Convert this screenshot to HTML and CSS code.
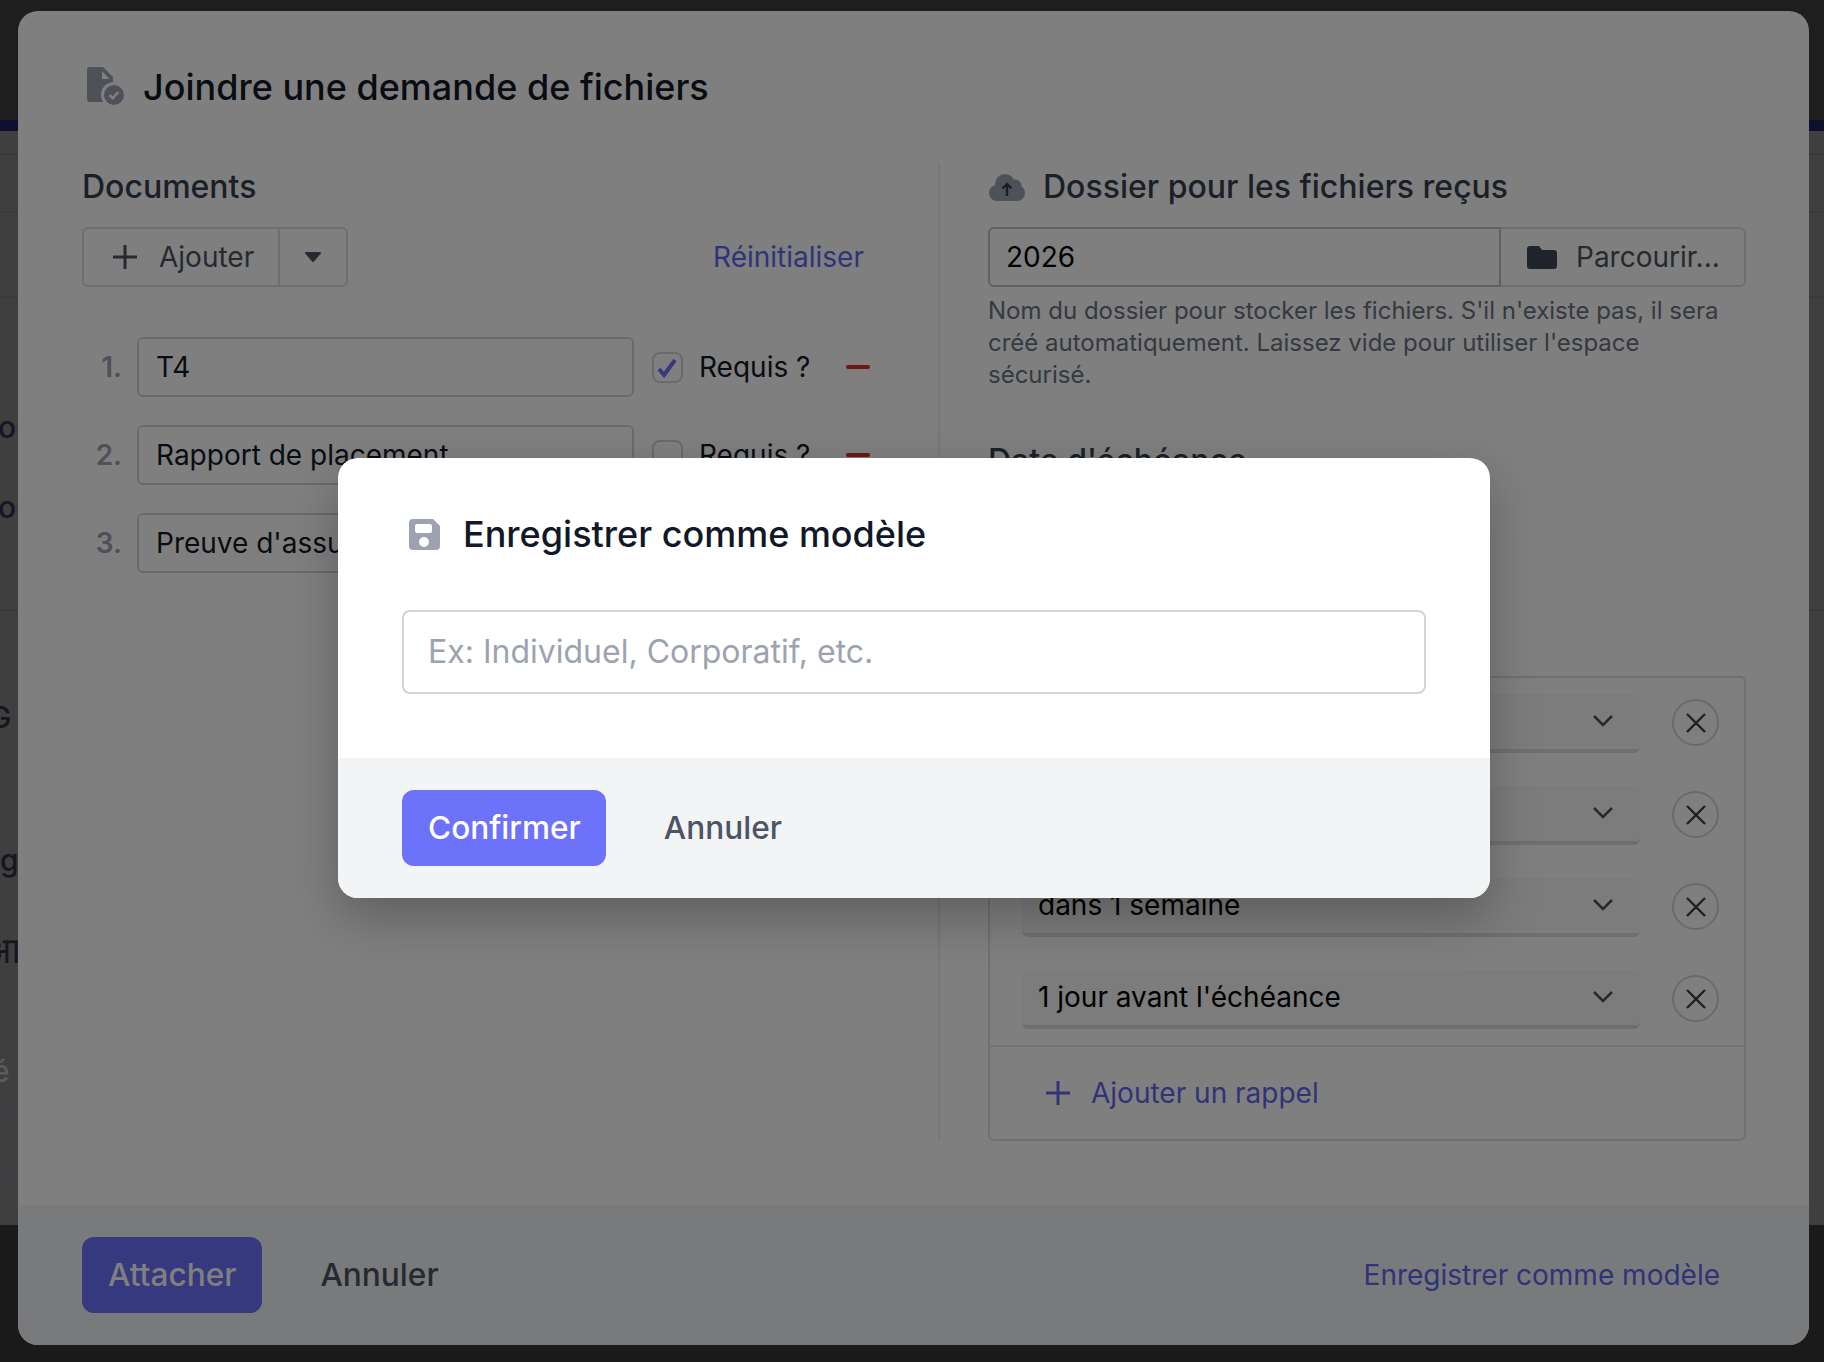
FILE: index.html
```html
<!DOCTYPE html>
<html lang="fr">

<head>
  <meta charset="UTF-8">
  <title>Enregistrer comme modèle</title>
  <link rel="stylesheet" href="styles.css">
</head>

<body>
  <!-- Page behind the dialogs -->
  <div class="page">
    <div class="page-top"></div>
    <div class="page-strip"></div>
    <div class="page-body">
      <div class="page-row row-a"></div>
      <div class="page-row row-b"></div>
      <div class="page-row row-c"></div>
      <div class="page-row row-d"></div>
      <div class="page-row row-e"></div>
      <div class="page-row row-f"></div>
      <div class="scrap scrap-1">ou</div>
      <div class="scrap scrap-2">ou</div>
      <div class="scrap scrap-3">G</div>
      <div class="scrap scrap-4">g</div>
      <div class="scrap scrap-5">आ</div>
      <div class="scrap scrap-6">é</div>
    </div>
  </div>

  <!-- First dialog -->
  <div class="modal">
    <div class="modal-main">
      <h2 class="modal-title">
        <svg class="title-icon" viewBox="0 0 40 40">
          <path fill="#9ca3af" d="M4 0h13l10 10v25H4a3 3 0 0 1-3-3V3a3 3 0 0 1 3-3z" />
          <path fill="#fff" d="M16 4l7.500 8H16z" />
          <circle fill="#fff" cx="28" cy="28" r="13" />
          <circle fill="#9ca3af" cx="28" cy="28" r="10" />
          <path fill="none" stroke="#fff" stroke-width="2.600" d="M23.500 28l3.200 3.200 5.600-6" />
        </svg>
        Joindre une demande de fichiers
      </h2>

      <div class="columns">
        <div class="col-left">
          <h3 class="section-title">Documents</h3>
          <div class="doc-actions">
            <div class="split-btn">
              <div class="split-main">
                <svg class="plus-icon" viewBox="0 0 26 26">
                  <path d="M13 1v24M1 13h24" />
                </svg>
                Ajouter
              </div>
              <div class="split-caret">
                <svg class="caret" viewBox="0 0 18 12">
                  <path d="M2 2h14l-7 8z" />
                </svg>
              </div>
            </div>
            <a class="link">Réinitialiser</a>
          </div>

          <div class="doc-row">
            <span class="doc-num">1.</span>
            <div class="text-input">T4</div>
            <span class="checkbox">
              <svg viewBox="0 0 27 27">
                <path d="M5 15l5 6 11-15" />
              </svg>
            </span>
            <span class="req-label">Requis ?</span>
            <span class="minus"></span>
          </div>
          <div class="doc-row">
            <span class="doc-num">2.</span>
            <div class="text-input">Rapport de placement</div>
            <span class="checkbox"></span>
            <span class="req-label">Requis ?</span>
            <span class="minus"></span>
          </div>
          <div class="doc-row">
            <span class="doc-num">3.</span>
            <div class="text-input">Preuve d'assurance</div>
            <span class="checkbox"></span>
            <span class="req-label">Requis ?</span>
            <span class="minus"></span>
          </div>
        </div>

        <div class="col-right">
          <h3 class="section-title with-icon">
            <svg class="cloud-icon" viewBox="0 0 36 27">
              <g fill="#9ca3af">
                <circle cx="8" cy="19" r="8" />
                <circle cx="16" cy="10" r="10" />
                <circle cx="26" cy="12" r="6.500" />
                <circle cx="28" cy="19" r="8" />
                <rect x="8" y="15" width="20" height="12" />
              </g>
              <path fill="none" stroke="#374151" stroke-width="2.400" d="M18 22V10M13.500 14.500L18 10l4.500 4.500" />
            </svg>
            Dossier pour les fichiers reçus
          </h3>
          <div class="folder-group">
            <div class="folder-input">2026</div>
            <div class="folder-btn">
              <svg class="folder-icon" viewBox="0 0 30 23">
                <path d="M3 0h9l3 4h12a3 3 0 0 1 3 3v13a3 3 0 0 1-3 3H3a3 3 0 0 1-3-3V3a3 3 0 0 1 3-3z" />
              </svg>
              Parcourir...
            </div>
          </div>
          <p class="help">Nom du dossier pour stocker les fichiers. S'il n'existe pas, il sera créé automatiquement. Laissez vide pour utiliser l'espace sécurisé.</p>

          <h3 class="section-title due-title">Date d'échéance</h3>

          <div class="reminders">
            <div class="reminder-list">
              <div class="reminder">
                <div class="select">dans 1 jour<svg class="chevron" viewBox="0 0 20 12"><path d="M1 1l9 9 9-9" /></svg></div>
                <span class="remove"><svg viewBox="0 0 20 20"><path d="M1 1l18 18M19 1L1 19" /></svg></span>
              </div>
              <div class="reminder">
                <div class="select">dans 3 jours<svg class="chevron" viewBox="0 0 20 12"><path d="M1 1l9 9 9-9" /></svg></div>
                <span class="remove"><svg viewBox="0 0 20 20"><path d="M1 1l18 18M19 1L1 19" /></svg></span>
              </div>
              <div class="reminder">
                <div class="select">dans 1 semaine<svg class="chevron" viewBox="0 0 20 12"><path d="M1 1l9 9 9-9" /></svg></div>
                <span class="remove"><svg viewBox="0 0 20 20"><path d="M1 1l18 18M19 1L1 19" /></svg></span>
              </div>
              <div class="reminder">
                <div class="select">1 jour avant l'échéance<svg class="chevron" viewBox="0 0 20 12"><path d="M1 1l9 9 9-9" /></svg></div>
                <span class="remove"><svg viewBox="0 0 20 20"><path d="M1 1l18 18M19 1L1 19" /></svg></span>
              </div>
            </div>
            <div class="reminder-add">
              <svg class="plus-icon link-plus" viewBox="0 0 26 26">
                <path d="M13 1v24M1 13h24" />
              </svg>
              Ajouter un rappel
            </div>
          </div>
        </div>
      </div>
    </div>

    <div class="modal-footer">
      <button class="btn-primary">Attacher</button>
      <button class="btn-plain">Annuler</button>
      <a class="link footer-link">Enregistrer comme modèle</a>
    </div>
  </div>
  <div class="backdrop"></div>

  <!-- Template name dialog -->
  <div class="dialog">
    <div class="dialog-main">
      <h2 class="dialog-title">
        <svg class="save-icon" viewBox="0 0 31 31">
          <path fill-rule="evenodd" d="M4 0h20l7 7v20a4 4 0 0 1-4 4H4a4 4 0 0 1-4-4V4a4 4 0 0 1 4-4zm4 5a2 2 0 0 0-2 2v5a2 2 0 0 0 2 2h13a2 2 0 0 0 2-2V7a2 2 0 0 0-2-2zm7 13a5 5 0 1 0 0 10 5 5 0 0 0 0-10z" />
        </svg>
        Enregistrer comme modèle
      </h2>
      <input class="name-input" type="text" placeholder="Ex: Individuel, Corporatif, etc.">
    </div>
    <div class="dialog-footer">
      <button class="btn-primary confirm-btn">Confirmer</button>
      <button class="btn-plain dialog-cancel">Annuler</button>
    </div>
  </div>
</body>

</html>
```

FILE: styles.css
```css
* {
  margin: 0;
  padding: 0;
  box-sizing: border-box;
}

html,
body {
  width: 1824px;
  height: 1362px;
  overflow: hidden;
}

body {
  font-family: 'Inter', sans-serif;
  font-size: 28px;
  color: #111827;
  background: #343434;
  position: relative;
}

/* Page behind the dialogs */
.page {
  height: 100%;
  display: flex;
  flex-direction: column;
}

.page-top {
  height: 120px;
  background: #3c3c3c;
}

.page-strip {
  height: 11px;
  background: #1e1e60;
}

.page-body {
  height: 1094px;
  background: #7e7e7e;
  position: relative;
  overflow: hidden;
}

.page-row {
  border-bottom: 2px solid #747474;
}

.row-a { height: 24px; }
.row-b { height: 58px; }
.row-c { height: 85px; }
.row-d { height: 313px; }
.row-e { height: 503px; border-bottom-color: #807a9a; }
.row-f { height: 67px; border-bottom-color: #807a9a; }

.scrap {
  position: absolute;
  font-size: 30px;
  font-weight: 500;
  color: #282e3e;
}

.scrap-1 { top: 278px; left: -2px; }
.scrap-2 { top: 358px; left: -2px; }
.scrap-3 { top: 568px; left: -11px; }
.scrap-4 { top: 711px; left: 0; }
.scrap-5 { top: 794px; left: -16px; font-size: 36px; }
.scrap-6 { top: 922px; left: -8px; color: #b6b6b6; }

.backdrop {
  position: absolute;
  top: 0;
  left: 0;
  right: 0;
  bottom: 0;
  background: rgba(0, 0, 0, 0.5);
}

/* First dialog */
.modal {
  position: absolute;
  top: 11px;
  left: 18px;
  width: 1791px;
  height: 1334px;
  background: #fff;
  border-radius: 20px;
  display: flex;
  flex-direction: column;
  overflow: hidden;
}

.modal-main {
  flex: 1;
  padding: 53px 64px 0;
}

.modal-title {
  display: flex;
  align-items: center;
  gap: 17px;
  height: 46px;
  font-size: 36px;
  font-weight: 500;
  color: #111827;
}

.title-icon {
  width: 40px;
  height: 40px;
  margin-left: 4px;
}

.columns {
  display: flex;
  margin-top: 53px;
}

.col-left {
  width: 858px;
  height: 977px;
  padding-right: 74px;
  border-right: 2px solid #eceef1;
}

.col-right {
  flex: 1;
  padding-left: 48px;
}

.section-title {
  height: 48px;
  line-height: 48px;
  font-size: 32px;
  font-weight: 500;
  color: #374151;
}

.with-icon {
  display: flex;
  align-items: center;
  gap: 18px;
}

.cloud-icon {
  width: 36px;
  height: 27px;
  margin-left: 1px;
}

.doc-actions {
  display: flex;
  justify-content: space-between;
  align-items: center;
  margin-top: 16px;
}

.split-btn {
  display: flex;
  width: 266px;
  height: 60px;
  border: 2px solid #dcdfe3;
  border-radius: 6px;
  color: #4b5563;
}

.split-main {
  width: 196px;
  display: flex;
  align-items: center;
  gap: 21px;
  padding-left: 28px;
  border-right: 2px solid #dcdfe3;
}

.split-caret {
  flex: 1;
  display: flex;
  align-items: center;
  justify-content: center;
}

.caret {
  width: 18px;
  height: 12px;
  fill: #4b5563;
  stroke: #4b5563;
  stroke-width: 2;
  stroke-linejoin: round;
}

.plus-icon {
  width: 26px;
  height: 26px;
  flex-shrink: 0;
  fill: none;
  stroke: #4b5563;
  stroke-width: 3;
}

.link {
  color: #6366f1;
}

.doc-row {
  display: flex;
  align-items: center;
  height: 60px;
  margin-top: 28px;
}

.doc-actions + .doc-row {
  margin-top: 50px;
}

.doc-num {
  width: 40px;
  flex-shrink: 0;
  text-align: right;
  color: #9ca3af;
  font-weight: 600;
}

.text-input {
  width: 497px;
  height: 60px;
  flex-shrink: 0;
  margin-left: 15px;
  padding-left: 17px;
  line-height: 56px;
  border: 2px solid #d1d5db;
  border-radius: 6px;
  white-space: nowrap;
  overflow: hidden;
}

.checkbox {
  width: 31px;
  height: 31px;
  margin-left: 18px;
  border: 2px solid #d1d5db;
  border-radius: 8px;
  flex-shrink: 0;
}

.checkbox svg {
  display: block;
  width: 27px;
  height: 27px;
  fill: none;
  stroke: #6c72fa;
  stroke-width: 4;
}

.req-label {
  margin-left: 16px;
  width: 147px;
  flex-shrink: 0;
}

.minus {
  width: 24px;
  height: 4px;
  flex-shrink: 0;
  border-radius: 2px;
  background: #dc2f24;
}

.folder-group {
  display: flex;
  height: 60px;
  margin-top: 16px;
  width: 758px;
}

.folder-input {
  width: 513px;
  padding-left: 16px;
  line-height: 56px;
  border: 2px solid #bcc0c6;
  border-radius: 6px 0 0 6px;
  color: #000;
}

.folder-btn {
  flex: 1;
  display: flex;
  align-items: center;
  gap: 19px;
  padding-left: 26px;
  border: 2px solid #dcdfe3;
  border-left: 0;
  border-radius: 0 6px 6px 0;
  color: #4b5563;
}

.folder-icon {
  width: 30px;
  height: 23px;
  fill: #414a5a;
}

.help {
  width: 758px;
  margin-top: 8px;
  font-size: 24px;
  line-height: 32px;
  color: #6b7280;
}

.due-title {
  margin-top: 46px;
  margin-bottom: 191px;
}

.reminders {
  width: 758px;
  height: 465px;
  border: 2px solid #dfe1e5;
  border-radius: 6px;
  display: flex;
  flex-direction: column;
}

.reminder-list {
  height: 367px;
  padding: 16px 25px 0 32px;
  display: flex;
  flex-direction: column;
  gap: 33px;
}

.reminder {
  display: flex;
  align-items: center;
  justify-content: space-between;
  height: 59px;
}

.select {
  width: 618px;
  height: 59px;
  display: flex;
  align-items: center;
  justify-content: space-between;
  padding: 0 27px 2px 16px;
  background: #f6f9f6;
  border-bottom: 4px solid #dedee0;
  border-radius: 6px;
  color: #000;
}

.chevron {
  width: 20px;
  height: 12px;
  fill: none;
  stroke: #4b5563;
  stroke-width: 2.500;
}

.remove {
  width: 47px;
  height: 47px;
  display: flex;
  align-items: center;
  justify-content: center;
  border: 2px solid #d1d5db;
  border-radius: 50%;
  margin-top: -2px;
}

.remove svg {
  width: 20px;
  height: 20px;
  fill: none;
  stroke: #374151;
  stroke-width: 2.400;
}

.reminder-add {
  flex: 1;
  display: flex;
  align-items: center;
  gap: 20px;
  padding-left: 55px;
  border-top: 2px solid #e5e7eb;
  color: #6366f1;
}

.link-plus {
  stroke: #6366f1;
}

.modal-footer {
  height: 140px;
  flex-shrink: 0;
  display: flex;
  align-items: center;
  padding: 0 89px 0 64px;
  background: #f3f4f6;
}

.footer-link {
  margin-left: auto;
}

.btn-primary {
  height: 76px;
  padding: 0 26px 2px;
  font-family: inherit;
  font-size: 31.600px;
  font-weight: 500;
  color: #fff;
  background: #6c72fa;
  border: 0;
  border-radius: 12px;
}

.confirm-btn {
  padding: 0 25px 2px 26px;
}

.btn-plain {
  height: 76px;
  padding-bottom: 2px;
  margin-left: 58px;
  font-family: inherit;
  font-size: 31.600px;
  font-weight: 500;
  color: #4b5563;
  background: none;
  border: 0;
}

/* Template name dialog */
.dialog {
  position: absolute;
  top: 458px;
  left: 338px;
  width: 1152px;
  height: 440px;
  background: #fff;
  border-radius: 20px;
  box-shadow: 0 20px 50px rgba(0, 0, 0, 0.25);
  display: flex;
  flex-direction: column;
  overflow: hidden;
}

.dialog-main {
  flex: 1;
  padding: 54px 64px 0;
}

.dialog-title {
  display: flex;
  align-items: center;
  gap: 23px;
  height: 44px;
  font-size: 36px;
  font-weight: 500;
  color: #111827;
}

.save-icon {
  width: 31px;
  height: 31px;
  margin-left: 7px;
  fill: #9ca3af;
}

.name-input {
  display: block;
  width: 1024px;
  height: 84px;
  margin-top: 54px;
  padding: 0 24px 2px;
  font-family: inherit;
  font-size: 32px;
  border: 2px solid #d1d5db;
  border-radius: 8px;
  outline: 0;
}

.name-input::placeholder {
  color: #9ca3af;
}

.dialog-footer {
  height: 140px;
  flex-shrink: 0;
  display: flex;
  align-items: center;
  padding: 0 64px;
  background: #f3f4f6;
}
```
